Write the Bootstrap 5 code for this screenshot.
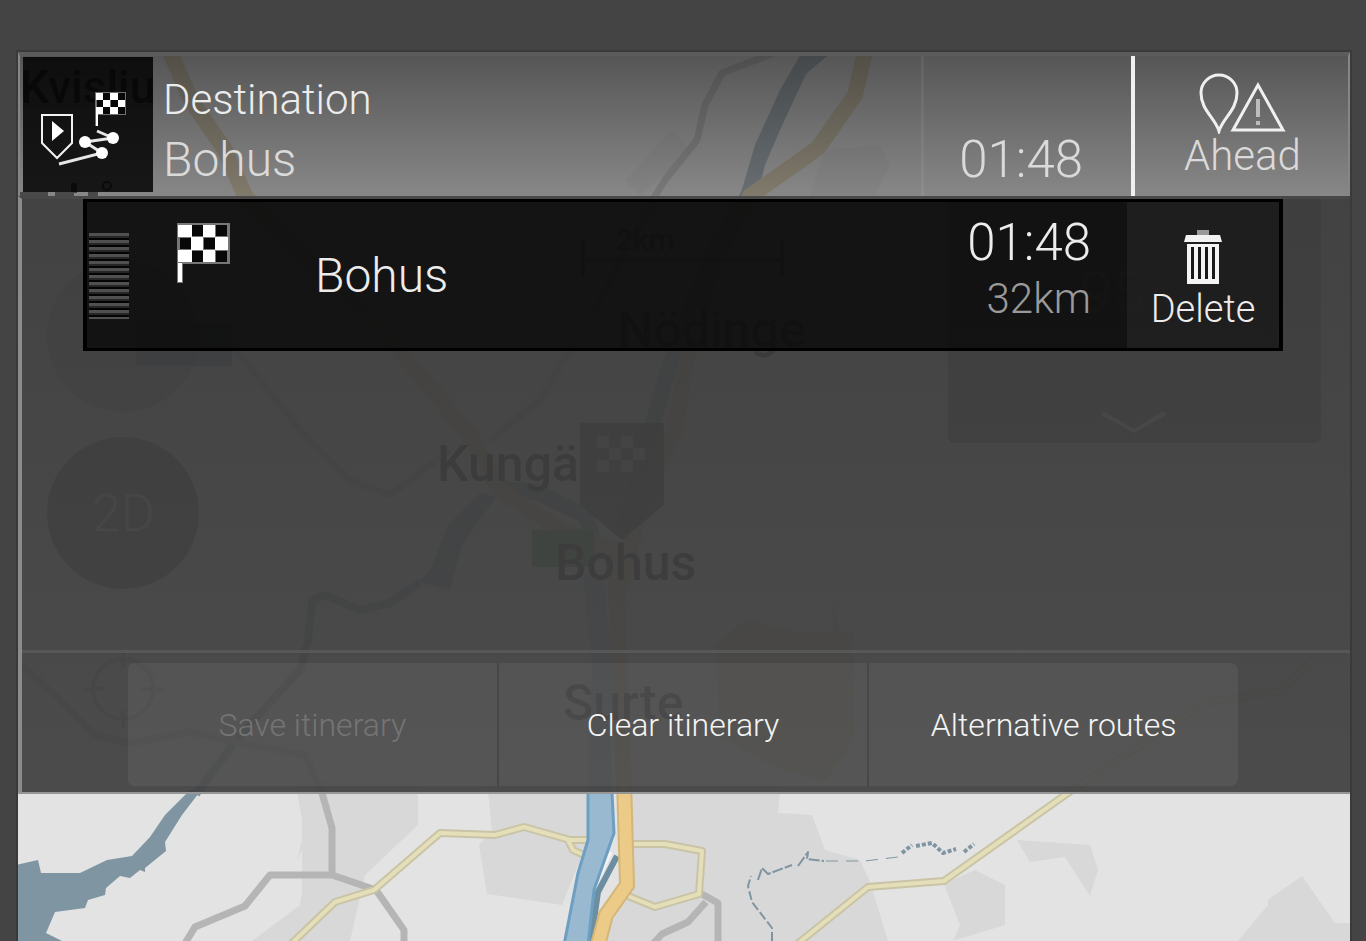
<!DOCTYPE html>
<html lang="en">
<head>
<meta charset="utf-8">
<meta name="viewport" content="width=device-width, initial-scale=1">
<title>Itinerary</title>
<link rel="stylesheet" href="https://cdn.jsdelivr.net/npm/bootstrap@5.3.0/dist/css/bootstrap.min.css">
<style>
body { background: #444; font-family: Roboto, "Liberation Sans", sans-serif; font-weight: 300; color: #ececec; line-height: 1; }
.screen { margin: 52px 16px 0 18px; min-height: calc(100vh - 52px); overflow: hidden; box-shadow: 0 0 0 2px #3a3a3a; }
.map-layer { position: absolute; inset: 0; width: 100%; height: 100%; }
.map-layer text { font-weight: 500; font-size: 50px; }
.front { position: relative; }
.route-head { height: 144px; border: solid #5c5c5c; border-width: 4px 2px 0; border-color: #5c5c5c #868686; background: linear-gradient(rgba(55,55,55,.82), rgba(92,92,92,.68)); background-clip: padding-box; }
.route-icon { width: 130px; height: 135px; margin: 1px 0 0 3px; background: rgba(0,0,0,.83); }
.route-icon svg { display: block; }
.dest { padding: 22px 0 0 10px; }
.t-xl { font-size: 51px; line-height: 60px; }
.t-lg { font-size: 48px; line-height: 60px; }
.t-md { font-size: 42px; line-height: 44px; }
.t-sm { font-size: 32px; line-height: 40px; }
.soft { color: #dadada; }
.dim { color: #9a9a9a; }
.eta { flex: 0 0 210px; border-left: 3px solid rgba(255,255,255,.06); padding: 74px 48px 0 0; text-align: right; }
.plain { background: none; border: 0; color: inherit; font-weight: 300; padding: 0; }
.ahead { flex: 0 0 217px; border-left: 4px solid #f0f0f0; color: #dadada; padding: 0 0 2px 2px; }
.ahead svg, .delete svg { display: block; margin: 0 auto; }
.panel { border-left: 4px solid #8c8c8c; border-top: 3px solid #484848; background: linear-gradient(rgba(60,60,60,.96), rgba(66,66,66,.94)); background-clip: padding-box; }
.stops { min-height: 451px; padding: 0 67px 0 61px; }
.stop { height: 152px; border: 3px solid #000; border-width: 3px 4px; background: rgba(0,0,0,.7); }
.grip { width: 40px; height: 86px; margin: 31px 0 0 2px; background: repeating-linear-gradient(#505050 0 3px, #262626 3px 5px, #040404 5px 7px); }
.flagbox { width: 140px; padding: 21px 0 0 48px; }
.flagbox svg { display: block; }
.stop-name { padding: 44px 0 0 46px; }
.stop-figs { padding: 11px 36px 0 0; }
.delete { width: 152px; background: rgba(255,255,255,.05); padding: 12px 0 0; }
.delete span { font-size: 38px; line-height: 48px; }
.actions { border-top: 3px solid #575757; height: 142px; padding: 10px 112px 6px 106px; }
.act { flex: 1 1 0; background: rgba(255,255,255,.06); color: #f4f4f4; }
.act + .act { border-left: 2px solid #474747; }
.act:first-child { border-radius: 6px 0 0 6px; }
.act:last-child { border-radius: 0 8px 8px 0; }
.act:disabled { color: #747474; }
.rim { border-top: 2px solid #969696; min-height: 100px; }
</style>
</head>
<body>
<main class="screen position-relative d-flex flex-column">
<svg class="map-layer" viewBox="18 52 1332 889" preserveAspectRatio="xMidYMin slice" aria-hidden="true">
  <rect x="18" y="52" width="1332" height="889" fill="#e3e3e3"/>
  <!-- built-up areas -->
  <g fill="#d8d8d8">
    <path d="M295 780H418V825L365 875L350 941H252L300 905L302 890V850L297 860L302 840V820Z"/>
    <path d="M487 780H588V840L562 905L487 894L479 845L492 831Z"/>
    <path d="M632 780H781L778 813L812 815L825 850L860 860L870 882L888 941H600L632 890Z"/>
    <path d="M1017 840L1030 862L1065 857L1090 896L1098 870L1090 845Z"/>
    <path d="M944 884L975 870L1005 885L1005 925L953 941L960 925Z"/>
    <path d="M1238 941L1268 905L1268 900L1302 876L1335 923H1350V941Z"/>
    <path d="M672 130L690 150L640 196L625 180ZM825 150L880 145L890 165L875 196H810Z"/>
  </g>
  <path d="M715 645L745 620L800 632H853V740L825 782L770 765L720 735ZM833 600L842 640H833Z" fill="#c9bf97"/>
  <!-- water -->
  <g fill="#8095a2">
    <path d="M16 865L38 860L41 873H80L107 860L132 856L150 837L165 815L190 790L205 785L182 815L165 842L166 851L145 868V872L140 870L130 878L120 876L106 888L105 895L88 900L85 908L55 912L46 933L62 941H16Z"/>
    <path d="M418 582L450 590L462 545L496 497L480 493L448 525L430 570Z"/>
    <path d="M802 52H832L806 74L780 130L765 165L757 196H740L755 145L780 90Z"/>
  </g>
  <g fill="none" stroke="#8095a2" stroke-linejoin="round">
    <path d="M196 794L240 735L300 670L308 640L312 600L325 595L360 610L390 603L420 582" stroke-width="8"/>
    <path d="M748 196L715 250L690 310L665 380L648 440L625 530" stroke-width="16"/>
    <path d="M500 488L535 492L585 515L600 560" stroke-width="16"/>
    <path d="M617 856L598 892L591 941" stroke-width="6" stroke="#6d8da1"/>
    <path d="M611 852L590 898L583 941" stroke-width="3" stroke="#f4f4f4"/>
    <path d="M772 941V928L752 902L748 886L751 876" stroke-width="2" stroke-dasharray="9 3"/>
    <path d="M758 880L762 868L768 874L792 865M798 866L808 852L807 859L824 861" stroke-width="2" stroke-dasharray="11 2"/>
    <path d="M826 861H865L898 857" stroke-width="1" stroke-dasharray="12 8"/>
    <path d="M902 853L912 845M916 846L932 843L943 853L956 849M964 852L974 844" stroke-width="4" stroke-dasharray="4 2"/>
  </g>
  <!-- local roads -->
  <g fill="none" stroke="#b5b5b5" stroke-width="7" stroke-linejoin="round">
    <path d="M22 665L60 700L95 735L130 743L190 732L250 745L305 755L322 793L332 828V875H270L245 906L195 927L184 945M332 875L376 890L404 930V945"/>
    <path d="M700 893L718 903V945M706 902L688 922L662 934L652 945"/>
    <path d="M776 52L722 73L705 105L697 140L665 180L655 196L600 300L570 350L540 400L490 440"/>
    <path d="M232 345L300 430L350 480L390 495L450 450"/>
  </g>
  <g fill="none" stroke-linejoin="round">
    <path d="M290 945L335 902L374 890L440 833L495 835L524 827L570 840H592M568 840L573 850L588 857M630 844H665L702 851L699 894L655 907L628 896M796 945L868 887L944 881L1068 793L1205 703L1280 691L1318 655" stroke="#c9c4a6" stroke-width="8"/>
    <path d="M290 945L335 902L374 890L440 833L495 835L524 827L570 840H592M568 840L573 850L588 857M630 844H665L702 851L699 894L655 907L628 896M796 945L868 887L944 881L1068 793L1205 703L1280 691L1318 655" stroke="#e4deb9" stroke-width="4"/>
  </g>
  <!-- river and motorway -->
  <path d="M583 575L592 670L588 745V840L578 873L564 945H588L594 890L614 833L611 740L613 670L603 575Z" fill="#98b9cf"/>
  <path d="M588 793V840L578 873L564 945M612 793L614 833L594 890L588 945" fill="none" stroke="#6d9fc2" stroke-width="3"/>
  <path d="M170 52L192 102L225 150L245 196L390 340L470 435L500 490L560 530L612 550L618 620L624 785M865 52L855 95L818 148L750 196L715 260L690 340L675 430L640 510L618 600" fill="none" stroke="#cdba8c" stroke-width="16" stroke-linejoin="round"/>
  <path d="M624 780L627 885L606 915L598 945" fill="none" stroke="#d3b678" stroke-width="16"/>
  <path d="M624 780L627 885L606 915L598 945" fill="none" stroke="#ecca88" stroke-width="12"/>
  <rect x="532" y="530" width="62" height="37" fill="#3c9a50"/>
  <rect x="136" y="322" width="96" height="44" fill="#5a7397"/>
  <!-- place names -->
  <g fill="#050505">
    <text x="20" y="103" style="font-size:46px">Kvislju</text>
    <text x="618" y="347">Nödinge</text>
    <text x="437" y="481">Kungä</text>
    <text x="555" y="580">Bohus</text>
    <text x="563" y="720">Surte</text>
    <text x="616" y="250" style="font-size:30px">2km</text>
  </g>
  <path d="M583 240V277M782 240V277M583 260H782" stroke="#111" stroke-width="3"/>
  <path d="M71 183H77V193H71Z"/><circle cx="107" cy="186" r="4" fill="none" stroke="#000" stroke-width="2"/>
  <path d="M20 194H48M55 194H74M88 194H98" stroke="#222" stroke-width="4"/>
  <!-- on-map controls -->
  <g fill="#222" fill-opacity=".7">
    <circle cx="123" cy="336" r="76" fill-opacity=".3"/><circle cx="123" cy="513" r="76"/>
    <rect x="948" y="196" width="373" height="247" rx="6" fill-opacity=".6"/>
    <path d="M580 423H664V505L622 540L580 505Z" fill-opacity=".8"/>
  </g>
  <path d="M597 436h12v12h-12zM621 436h12v12h-12zM609 448h12v12h-12zM633 448h12v12h-12zM597 460h12v12h-12zM621 460h12v12h-12z" fill="#aaa"/>
  <text x="92" y="531" fill="#ccc" style="font-weight:300;font-size:52px">2D</text>
  <text x="1080" y="312" fill="#ddd" style="font-weight:300;font-size:58px">95</text>
  <path d="M1102 413L1134 431L1165 413" fill="none" stroke="#fff" stroke-width="4"/>
  <g fill="none" stroke="#aaa" stroke-width="4"><circle cx="123" cy="689" r="30"/><path d="M123 650V668M123 710V728M82 689H104M142 689H166"/></g>
</svg>

<header class="route-head front d-flex">
  <div class="route-icon flex-shrink-0">
    <svg width="130" height="135" viewBox="23 57 130 135" role="img" aria-label="Itinerary">
      <path d="M42 115H72V143L57 158L42 143Z" fill="none" stroke="#f2f2f2" stroke-width="2"/>
      <path d="M52 121L64 131L52 141Z" fill="#fff"/>
      <path d="M59 164L102 153L85 142L113 138L97 131" fill="none" stroke="#e6e6e6" stroke-width="3"/>
      <g fill="#fff"><circle cx="85" cy="142" r="6"/><circle cx="113" cy="138" r="6"/><circle cx="102" cy="153" r="6"/></g>
      <path d="M95 92H126V115H97V126H95Z" fill="#707070"/>
      <path d="M103 93h7v7h-7zM118 93h7v7h-7zM97 100h6v7h-6zM111 100h7v7h-7zM103 107h7v7h-7zM118 107h7v7h-7z" fill="#080808"/>
      <path d="M96 93h7v7h-7zM110 93h8v7h-8zM103 100h7v7h-7zM118 100h7v7h-7zM96 107h7v7h-7zM110 107h8v7h-8zM96 113h2v13h-2z" fill="#fff"/>
    </svg>
  </div>
  <div class="dest flex-grow-1">
    <div class="t-md">Destination</div>
    <div class="t-lg soft pt-2">Bohus</div>
  </div>
  <div class="eta t-xl soft">01:48</div>
  <button type="button" class="plain ahead t-md">
    <svg width="98" height="62" viewBox="0 0 90 62" fill="none" stroke="#f0f0f0" stroke-width="3" aria-hidden="true">
      <path d="M21 59C17 46 3 38 3 21A18 18 0 0 1 39 21C39 38 25 46 21 59Z"/>
      <path d="M60 13L35 58H85Z"/>
      <path d="M60 27V45M60 49V53" stroke="#bcbcbc" stroke-width="4"/>
    </svg>
    Ahead
  </button>
</header>

<section class="panel front">
  <div class="stops">
    <div class="stop d-flex">
      <button type="button" class="plain grip flex-shrink-0" aria-label="Move stop"></button>
      <div class="flagbox flex-shrink-0">
        <svg width="54" height="60" viewBox="0 0 54 60" aria-hidden="true">
          <path d="M0 0H53V41H6V60H0Z" fill="#777"/>
          <path d="M15 2h11v11h-11zM39 2h11v11h-11zM3 15h11v11h-11zM27 15h11v11h-11zM15 28h11v11h-11zM39 28h11v11h-11z" fill="#080808"/>
          <path d="M1 2h14v12h-14zM26 2h12v12h-12zM14 14h12v13h-12zM38 14h13v13h-13zM1 27h14v12h-14zM26 27h12v12h-12zM1 40h4v19h-4z" fill="#fff"/>
        </svg>
      </div>
      <div class="stop-name t-lg flex-grow-1">Bohus</div>
      <div class="stop-figs text-end">
        <div class="t-xl">01:48</div>
        <div class="t-md dim pt-1">32km</div>
      </div>
      <button type="button" class="plain delete soft">
        <svg width="38" height="55" viewBox="0 0 38 55" aria-hidden="true">
          <path d="M13 0H25V5H13Z" fill="#999"/>
          <path d="M2 5H36L38 12H0Z" fill="#f2f2f2"/>
          <path d="M3 14H35V54H3Z" fill="#f4f4f4"/>
          <path d="M7 17H10V49H7ZM14 17H17V49H14ZM21 17H24V49H21ZM28 17H31V49H28Z" fill="#181818"/>
        </svg>
        <span>Delete</span>
      </button>
    </div>
  </div>
  <div class="actions d-flex">
    <button type="button" class="plain act t-sm" disabled>Save itinerary</button>
    <button type="button" class="plain act t-sm">Clear itinerary</button>
    <button type="button" class="plain act t-sm">Alternative routes</button>
  </div>
</section>
<div class="rim front flex-grow-1"></div>
</main>
<script src="https://cdn.jsdelivr.net/npm/bootstrap@5.3.0/dist/js/bootstrap.bundle.min.js"></script>
</body>
</html>
